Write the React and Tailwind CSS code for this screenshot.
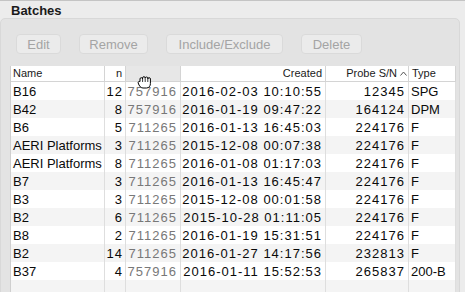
import React from "react";

const rows = [
  ["B16", "12", "757916", "2016-02-03 10:10:55", "12345", "SPG"],
  ["B42", "8", "757916", "2016-01-19 09:47:22", "164124", "DPM"],
  ["B6", "5", "711265", "2016-01-13 16:45:03", "224176", "F"],
  ["AERI Platforms", "3", "711265", "2015-12-08 00:07:38", "224176", "F"],
  ["AERI Platforms", "8", "711265", "2016-01-08 01:17:03", "224176", "F"],
  ["B7", "3", "711265", "2016-01-13 16:45:47", "224176", "F"],
  ["B3", "3", "711265", "2015-12-08 00:01:58", "224176", "F"],
  ["B2", "6", "711265", "2015-10-28 01:11:05", "224176", "F"],
  ["B8", "2", "711265", "2016-01-19 15:31:51", "224176", "F"],
  ["B2", "14", "711265", "2016-01-27 14:17:56", "232813", "F"],
  ["B37", "4", "757916", "2016-01-11 15:52:53", "265837", "200-B"],
];

function Btn({ w, children }) {
  return (
    <div
      className={`${w} h-[20px] rounded-[4px] bg-[#ebebeb] border border-[#dadada] text-[13px] text-[#a4a4a4] flex items-center justify-center leading-none`}
    >
      {children}
    </div>
  );
}

const grid = "grid grid-cols-[94px_21px_55px_145px_83px_47px]";

function Row({ r, i }) {
  const bg = i % 2 === 0 ? "bg-white" : "bg-[#f4f4f4]";
  const cell = "border-r border-[#dedede] h-[18px] flex items-center pt-[1px] overflow-hidden whitespace-nowrap";
  return (
    <div className={`${grid} ${bg} text-[13px] text-[#0a0a0a]`}>
      <div className={`${cell} pl-[2px]`}>{r[0]}</div>
      <div className={`${cell} justify-end pr-[2px] tracking-[1px]`}>{r[1]}</div>
      <div className={`${cell} justify-end pr-[3px] tracking-[1px] text-[#787878]`}>{r[2]}</div>
      <div className={`${cell} justify-end pr-[3px] tracking-[1px]`}>{r[3]}</div>
      <div className={`${cell} justify-end pr-[3px] tracking-[1px]`}>{r[4]}</div>
      <div className={`${cell} pl-[2px]`}>{r[5]}</div>
    </div>
  );
}

export default function App() {
  const hcell = "border-r border-[#d4d4d4] h-[15px] flex items-center text-[11px] text-[#1a1a1a] whitespace-nowrap";
  return (
    <div className="w-[465px] h-[292px] overflow-hidden bg-[#ececec] border-t border-[#c4c4c4] relative font-['Liberation_Sans',sans-serif]">
      <div className="h-[17px] pl-[11px] text-[13px] font-bold leading-[19px] text-[#1a1a1a]">Batches</div>
      <div className="mr-[5px] h-[300px] rounded-t-[5px] bg-[#e3e3e3] border border-[#d8d8d8]">
        <div className="flex gap-[18px] pl-[15px] pt-[15px]">
          <Btn w="w-[45px]">Edit</Btn>
          <Btn w="w-[69px]">Remove</Btn>
          <Btn w="w-[117px]">Include/Exclude</Btn>
          <Btn w="w-[61px]">Delete</Btn>
        </div>
        <div className="ml-[9px] mt-[12px] w-[446px] bg-white border-l border-[#cfcfcf]">
          <div className={`${grid} bg-white border-b border-[#d4d4d4]`}>
            <div className={`${hcell} pl-[2px]`}>Name</div>
            <div className={`${hcell} justify-end pr-[3px]`}>n</div>
            <div className={`${hcell} bg-[#e7e7e7]`}></div>
            <div className={`${hcell} justify-end pr-[3px]`}>Created</div>
            <div className={`${hcell} justify-end pr-[1px] gap-[3px] text-[11.5px]`}>
              <span>Probe S/N</span>
              <svg width="7" height="5" viewBox="0 0 7 5">
                <polyline points="0.5,4.5 3.5,1 6.5,4.5" fill="none" stroke="#555" strokeWidth="1" />
              </svg>
            </div>
            <div className={`${hcell} pl-[3px] text-[11.5px]`}>Type</div>
          </div>
          {rows.map((r, i) => (
            <Row key={i} r={r} i={i} />
          ))}
          <Row r={["", "", "", "", "", ""]} i={11} />
        </div>
      </div>
      <svg className="absolute left-[137px] top-[74px]" width="15" height="14" viewBox="0 0 15 14">
        <path
          d="M3 6 V4 a1.3 1.3 0 0 1 2.6 0 V3 a1.3 1.3 0 0 1 2.6 0 V3.3 a1.3 1.3 0 0 1 2.6 0 V4 a1.3 1.3 0 0 1 2.6 0 V8.5 C13.4 11 12 13 9.5 13 H6 C4 13 3 11.5 2 10 L1.2 8 C0.8 7 2 6 3 6.6 Z"
          fill="#fff"
          stroke="#000"
          strokeWidth="1"
        />
        <line x1="5.6" y1="4" x2="5.6" y2="7" stroke="#000" strokeWidth="0.8" />
        <line x1="8.2" y1="3.5" x2="8.2" y2="7" stroke="#000" strokeWidth="0.8" />
        <line x1="10.8" y1="4" x2="10.8" y2="7" stroke="#000" strokeWidth="0.8" />
      </svg>
    </div>
  );
}
